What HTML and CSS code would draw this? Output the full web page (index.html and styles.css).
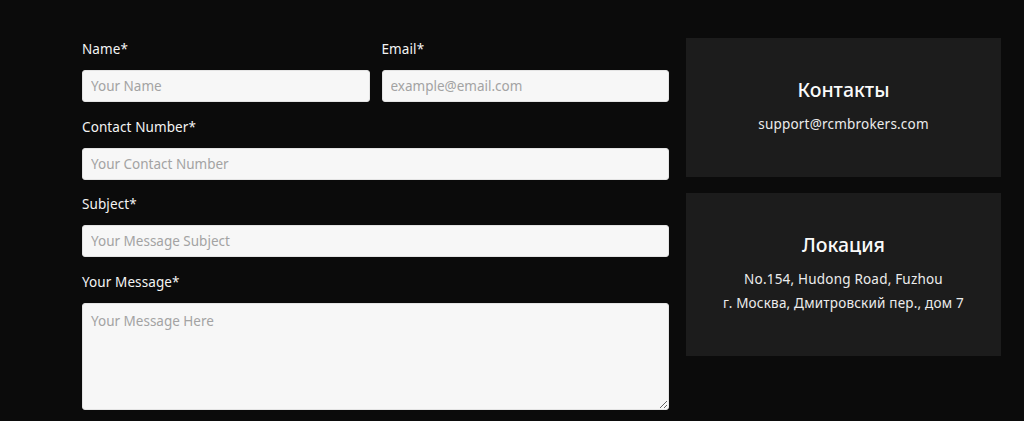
FILE: index.html
```html
<!DOCTYPE html>
<html lang="ru">
<head>
<meta charset="utf-8">
<title>Contact</title>
<link rel="stylesheet" href="styles.css">
</head>
<body>
<div class="page">
  <form class="form">
    <div class="row two">
      <div class="field">
        <label class="label">Name*</label>
        <input class="input" type="text" placeholder="Your Name">
      </div>
      <div class="field">
        <label class="label">Email*</label>
        <input class="input" type="email" placeholder="example@email.com">
      </div>
    </div>
    <div class="field">
      <label class="label">Contact Number*</label>
      <input class="input" type="text" placeholder="Your Contact Number">
    </div>
    <div class="field">
      <label class="label">Subject*</label>
      <input class="input" type="text" placeholder="Your Message Subject">
    </div>
    <div class="field">
      <label class="label">Your Message*</label>
      <textarea class="input textarea" placeholder="Your Message Here"></textarea>
    </div>
  </form>
  <aside class="side">
    <div class="card">
      <h3 class="card-title">Контакты</h3>
      <p class="card-text">support@rcmbrokers.com</p>
    </div>
    <div class="card">
      <h3 class="card-title">Локация</h3>
      <p class="card-text">No.154, Hudong Road, Fuzhou</p>
      <p class="card-text">г. Москва, Дмитровский пер., дом 7</p>
    </div>
  </aside>
</div>
</body>
</html>
```

FILE: styles.css
```css
* { box-sizing: border-box; }
html, body {
  margin: 0;
  padding: 0;
  background: #0b0b0b;
  height: 421px;
  overflow: hidden;
}
body {
  font-family: "Noto Sans", "Open Sans", sans-serif;
  color: #f2f2f2;
}
.page {
  display: flex;
  gap: 17px;
  padding: 38px 0 0 82px;
  width: 1001px;
}
.form {
  width: 587px;
  display: flex;
  flex-direction: column;
  gap: 14.5px;
  padding-top: 1px;
}
.row.two {
  display: flex;
  gap: 12px;
}
.row.two .field { flex: 1; }
.field {
  display: flex;
  flex-direction: column;
}
.label {
  font-size: 13.5px;
  font-weight: 400;
  line-height: 20px;
  margin-bottom: 11px;
  color: #f4f4f4;
  letter-spacing: 0.1px;
}
.input {
  height: 32px;
  border: 1px solid #e4e4e4;
  border-radius: 3px;
  background: #f7f7f7;
  padding: 0 8px;
  font-family: inherit;
  font-size: 13.5px;
  color: #333;
  outline: none;
}
.input::placeholder { color: #a3a3a3; }
.textarea {
  height: 107px;
  padding: 8px;
  resize: vertical;
}
.side {
  width: 315px;
  display: flex;
  flex-direction: column;
  gap: 16px;
}
.card {
  background: #1c1c1c;
  padding: 39px 20px 41px;
  text-align: center;
}
.card-title {
  margin: 0 0 9px;
  font-size: 19.5px;
  font-weight: 500;
  line-height: 26px;
  color: #fafafa;
}
.card-text {
  margin: 0;
  font-size: 13.5px;
  line-height: 24px;
  color: #ececec;
  letter-spacing: 0.2px;
}
```
